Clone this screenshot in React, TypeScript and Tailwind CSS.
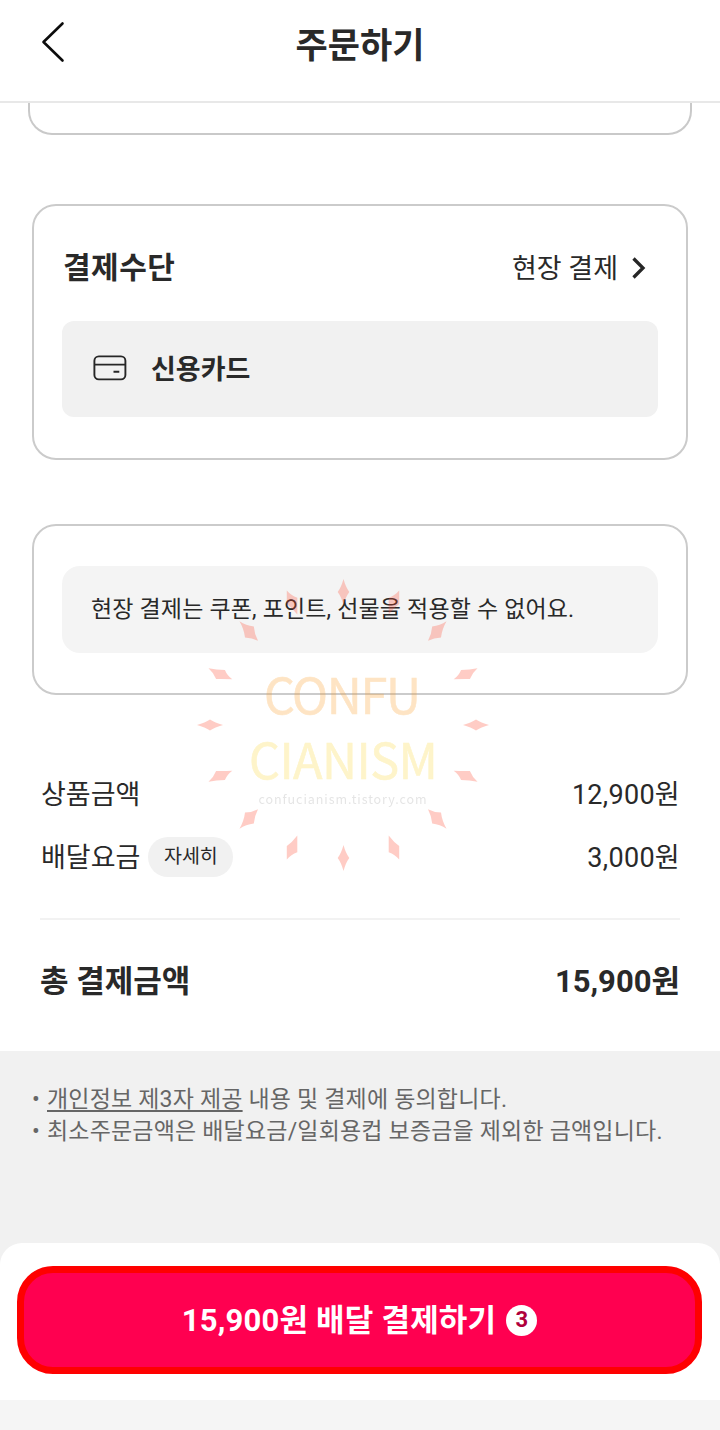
import type { ReactNode } from "react";

type PriceRowProps = { label: string; amount: string; extra?: ReactNode };

function BackIcon() {
  return (
    <svg width="24" height="42" viewBox="0 0 24 42" fill="none" stroke="#0c0c0c" strokeWidth="2.6">
      <path d="M21.5 2.5 2.5 21 21.5 39.5" strokeLinecap="round" strokeLinejoin="round" />
    </svg>
  );
}

function CardIcon() {
  return (
    <svg width="34" height="26" viewBox="0 0 34 26" fill="none" stroke="#262626" strokeWidth="1.9">
      <rect x="1.4" y="1.4" width="31" height="23" rx="4.4" />
      <path d="M1.4 9.6h31M20.5 16.8h5.8" />
    </svg>
  );
}

function ChevronIcon() {
  return (
    <svg width="14" height="22" viewBox="0 0 14 22" fill="none" stroke="#262626" strokeWidth="3.3">
      <path d="M1.5 1.5 11 11 1.5 20.5" />
    </svg>
  );
}

// one spark per angle step, drawn in the lower right quarter and mirrored around
const sparks = {
  vertical: "M0-13Q2.2-4.8 5.8 0Q2.2 4.8 0 13Q-2.2 4.8-5.8 0Q-2.2-4.8 0-13Z",
  steep: "M-5.3-12Q0-5 5.2-1.5V12Q1 7-5.3 4.8Z",
  diagonal: "M-9-9.8Q-3-6.6 4-6.4Q5 2 9.5 9.8Q3 5.6-4.8 4.6Q-5.4-3-9-9.8Z",
  shallow: "M-11.8-5.3Q-4-4.8 4.4-5Q7 1.5 12 5.8Q4 4.2-4.4 4Q-6.6-1.5-11.8-5.3Z",
  horizontal: "M-13 0Q-4.8-2.2 0-5.5Q4.8-2.2 13 0Q4.8 2.2 0 5.5Q-4.8 2.2-13 0Z",
};

const quarter = [
  { d: sparks.steep, x: 51, y: 122.5 },
  { d: sparks.diagonal, x: 94, y: 94 },
  { d: sparks.shallow, x: 122.5, y: 51 },
];

function Watermark() {
  return (
    <svg
      className="pointer-events-none absolute left-[183px] top-[565px]"
      width="320"
      height="320"
      viewBox="-160 -160 320 320"
    >
      <g fill="#ff4a31" opacity="0.28">
        <path d={sparks.vertical} transform="translate(0.5 -133)" />
        <path d={sparks.vertical} transform="translate(0.5 133)" />
        <path d={sparks.horizontal} transform="translate(-133)" />
        <path d={sparks.horizontal} transform="translate(133)" />
        {[[1, 1], [-1, 1], [1, -1], [-1, -1]].map(([sx, sy]) => (
          <g key={`${sx}${sy}`} transform={`scale(${sx} ${sy})`}>
            {quarter.map((s) => (
              <path key={s.x} d={s.d} transform={`translate(${s.x} ${s.y})`} />
            ))}
          </g>
        ))}
      </g>
      <g fontFamily="'Noto Sans CJK KR', sans-serif" textAnchor="middle">
        <text x="-0.5" y="-11" fontSize="48.5" textLength="157" fill="#fb9d27" opacity="0.27" stroke="#fb9d27" strokeWidth="0.6">
          CONFU
        </text>
        <text x="0.5" y="54" fontSize="48.5" textLength="189" fill="#fadb4f" opacity="0.3" stroke="#fadb4f" strokeWidth="0.6">
          CIANISM
        </text>
        <text x="-0.5" y="79" fontSize="12.5" textLength="168" fill="#888" opacity="0.22">
          confucianism.tistory.com
        </text>
      </g>
    </svg>
  );
}

function PriceRow({ label, amount, extra }: PriceRowProps) {
  return (
    <div className="flex h-[63px] items-center justify-between text-[27px]">
      <div className="flex items-center">
        <span className="pl-px pt-[3px]">{label}</span>
        {extra}
      </div>
      <span className="pt-[3px] tracking-[0.3px]">{amount}</span>
    </div>
  );
}

export default function App() {
  return (
    <div className="relative flex h-[1430px] w-[720px] flex-col overflow-hidden bg-white font-['Roboto','Noto_Sans_CJK_KR',sans-serif] leading-none text-[#292929]">
      <header className="grid h-[103px] shrink-0 grid-cols-[120px_1fr_120px] border-b-2 border-[#e8e8e8]">
        <button type="button" aria-label="뒤로" className="flex items-center pb-[18px] pl-[41px]">
          <BackIcon />
        </button>
        <h1 className="flex items-center justify-center pb-2 text-[35px] font-bold">주문하기</h1>
      </header>

      <div className="mx-7 h-8 shrink-0 rounded-b-3xl border-2 border-t-0 border-[#c9c9c9]" />

      <section className="mx-8 mt-[69px] h-[256px] shrink-0 rounded-3xl border-2 border-[#cbcbcb] px-7">
        <div className="flex h-[115px] items-center justify-between pr-3 pt-2">
          <h2 className="pl-px text-[30px] font-bold tracking-[0.5px]">결제수단</h2>
          <button type="button" className="flex items-center gap-3.5 text-[27px]">
            <span className="pt-[3px]">현장 결제</span>
            <ChevronIcon />
          </button>
        </div>
        <div className="flex h-24 items-center gap-6 rounded-xl bg-[#f1f1f1] pb-0.5 pl-[31px]">
          <CardIcon />
          <span className="pt-1 text-[27px] font-bold">신용카드</span>
        </div>
      </section>

      <section className="mx-8 mt-16 h-[171px] shrink-0 rounded-3xl border-2 border-[#cbcbcb] px-7 pt-10">
        <p className="flex h-[87px] items-center rounded-[18px] bg-[#f4f4f4] pl-[29px] text-[23px] tracking-[0.17px]">
          현장 결제는 쿠폰, 포인트, 선물을 적용할 수 없어요.
        </p>
      </section>

      <section className="mx-10 mt-[67px] shrink-0">
        <PriceRow label="상품금액" amount="12,900원" />
        <PriceRow
          label="배달요금"
          amount="3,000원"
          extra={
            <button type="button" className="ml-2 flex h-10 w-[85px] items-center justify-center rounded-full bg-[#f1f1f1] text-[19.5px]">
              자세히
            </button>
          }
        />
        <div className="mt-[30px] h-0.5 bg-[#f2f2f2]" />
        <div className="flex h-[123px] items-center justify-between text-[31px] font-bold">
          <span>총 결제금액</span>
          <span>15,900원</span>
        </div>
      </section>

      <div className="mt-2 flex flex-1 flex-col bg-[#f1f1f1]">
        <ul className="px-[32px] pt-[33px] text-[23px] leading-8 tracking-[0.18px] text-[#666]">
          <li className="flex">
            <span className="w-[15px]">•</span>
            <p>
              <a className="underline decoration-2 underline-offset-3">개인정보 제3자 제공</a> 내용 및 결제에 동의합니다.
            </p>
          </li>
          <li className="flex">
            <span className="w-[15px]">•</span>
            <p>최소주문금액은 배달요금/일회용컵 보증금을 제외한 금액입니다.</p>
          </li>
        </ul>
      </div>

      <footer className="shrink-0 bg-[#f1f1f1]">
        <div className="h-[157px] rounded-t-[22px] bg-white pl-[17px] pr-[18px] pt-[23px]">
          <button
            type="button"
            className="flex h-[108px] w-full items-center justify-center gap-2.5 rounded-[36px] border-[7px] border-[#fe0000] bg-[#ff0050] text-[31px] font-bold text-white"
          >
            <span className="tracking-[0.2px]">15,900원 배달 결제하기</span>
            <span className="flex size-[31px] items-center justify-center rounded-full bg-white text-[22px] text-[#b0003c]">3</span>
          </button>
        </div>
        <div className="h-[30px] bg-[#f5f5f5]" />
      </footer>

      <Watermark />
    </div>
  );
}
